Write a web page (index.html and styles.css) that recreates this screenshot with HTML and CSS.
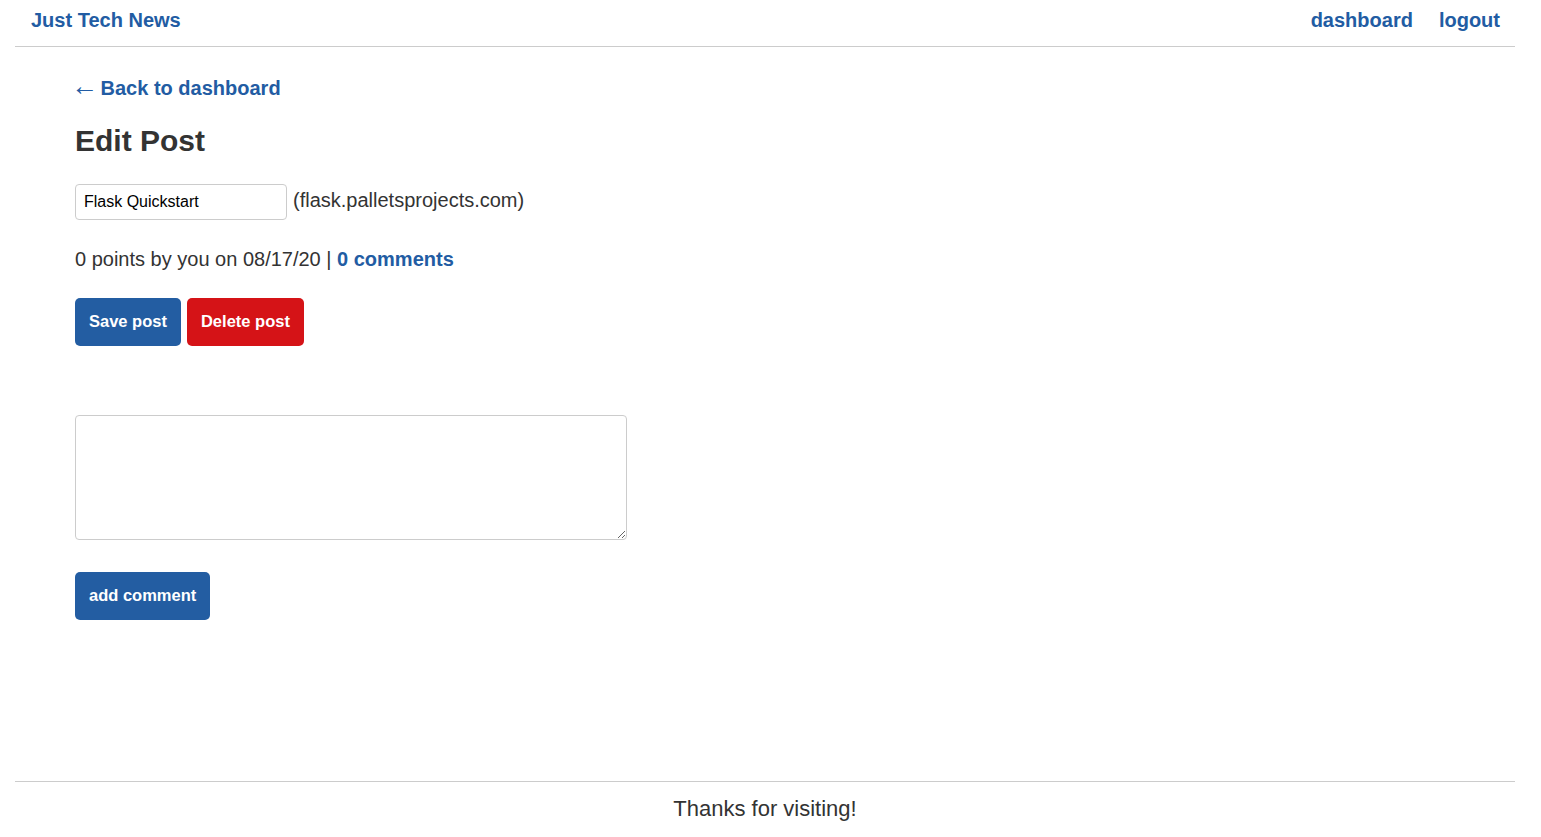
FILE: index.html
```html
<!DOCTYPE html>
<html lang="en">
<head>
<meta charset="utf-8">
<title>Just Tech News</title>
<link rel="stylesheet" href="styles.css">
</head>
<body>
<div class="page">
  <header class="site-header">
    <a class="brand" href="#">Just Tech News</a>
    <nav class="nav">
      <a href="#">dashboard</a>
      <a href="#">logout</a>
    </nav>
  </header>
  <main class="main">
    <a class="back" href="#"><span class="arrow">&larr;</span> Back to dashboard</a>
    <h2 class="title">Edit Post</h2>
    <form class="edit-form">
      <div class="title-row">
        <input class="title-input" type="text" value="Flask Quickstart">
        <span class="domain">(flask.palletsprojects.com)</span>
      </div>
      <div class="meta">0 points by you on 08/17/20 | <a href="#">0 comments</a></div>
      <div class="actions">
        <button type="button" class="btn btn-blue">Save post</button>
        <button type="button" class="btn btn-red">Delete post</button>
      </div>
    </form>
    <form class="comment-form">
      <textarea class="comment-text"></textarea>
      <div><button type="button" class="btn btn-blue">add comment</button></div>
    </form>
  </main>
  <footer class="site-footer">Thanks for visiting!</footer>
</div>
</body>
</html>
```
FILE: styles.css
```css
html, body {
  margin: 0;
  padding: 0;
  background: #fff;
}
body {
  font-family: "Liberation Sans", Arial, sans-serif;
  color: #333;
  font-size: 20px;
  line-height: 23px;
}
a {
  color: #225ca3;
  font-weight: bold;
  text-decoration: none;
}
.page {
  margin: 0 26px 0 15px;
  min-height: 837px;
  display: flex;
  flex-direction: column;
}
.site-header {
  display: flex;
  justify-content: space-between;
  align-items: center;
  padding: 9px 15px 14px 16px;
  border-bottom: 1px solid #ccc;
}
.nav {
  display: flex;
  gap: 26px;
}
.main {
  padding: 30px 60px 0;
  display: flex;
  flex-direction: column;
  align-items: flex-start;
}
.back {
  display: block;
}
.arrow {
  display: inline-block;
  font-weight: normal;
  font-size: 27px;
  line-height: 0;
  margin-left: -4px;
  margin-right: -3px;
}
.title {
  margin: 23px 0 0;
  font-size: 30px;
  line-height: 35px;
  font-weight: bold;
  color: #333;
}
.edit-form {
  margin-top: 26px;
}
.title-row {
  display: flex;
  align-items: center;
  gap: 6px;
}
.title-input {
  box-sizing: border-box;
  width: 212px;
  height: 36px;
  border: 1px solid #ccc;
  border-radius: 4px;
  padding: 0 8px;
  font-family: "Liberation Sans", Arial, sans-serif;
  font-size: 16px;
  color: #000;
  margin: 0;
}
.domain {
  position: relative;
  top: -2px;
}
.meta {
  margin-top: 28px;
}
.actions {
  margin-top: 27px;
  display: flex;
  gap: 6px;
}
.btn {
  border: none;
  border-radius: 5px;
  color: #fff;
  font-family: "Liberation Sans", Arial, sans-serif;
  font-size: 16.5px;
  font-weight: bold;
  line-height: 20px;
  padding: 13px 14px 15px;
  margin: 0;
  cursor: pointer;
}
.btn-blue {
  background: #235da2;
}
.btn-red {
  background: #d51317;
}
.comment-form {
  margin-top: 69px;
}
.comment-text {
  display: block;
  box-sizing: border-box;
  width: 552px;
  height: 125px;
  border: 1px solid #ccc;
  border-radius: 4px;
  margin: 0 0 32px;
  padding: 8px;
  font-family: "Liberation Sans", Arial, sans-serif;
  font-size: 16px;
}
.site-footer {
  margin-top: auto;
  border-top: 1px solid #ccc;
  padding: 14px 0 15px;
  font-size: 22px;
  line-height: 26px;
  text-align: center;
  color: #333;
}
```
